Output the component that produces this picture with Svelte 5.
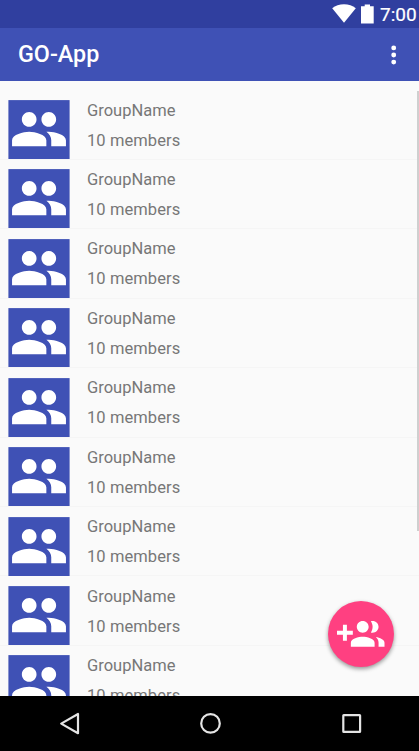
<script>
  const groups = Array.from({ length: 9 }, () => ({ name: 'GroupName', members: 10 }));
</script>

<div class="screen">
  <header class="status">
    <svg class="wifi" width="24" height="20" viewBox="0 0 24 20"><path d="M12 18.700 0.200 4.300C3.400 1.700 7.400.2 12 .2s8.600 1.500 11.800 4.100z" fill="#fff" /></svg>
    <svg class="battery" width="13" height="20" viewBox="0 0 13 20"><path d="M3.700 0.400h5.300v1.800h3.700v17.300H0V2.200h3.700z" fill="#fff" /></svg>
    <span class="clock">7:00</span>
  </header>

  <div class="toolbar">
    <h1>GO-App</h1>
    <svg width="8" height="22" viewBox="0 0 8 22" fill="#fff">
      <circle cx="3.700" cy="3.900" r="2.450" /><circle cx="3.700" cy="11" r="2.450" /><circle cx="3.700" cy="18.100" r="2.450" />
    </svg>
  </div>

  <main>
    <ul>
      {#each groups as group}
        <li>
          <svg class="avatar" width="62" height="60" viewBox="0 0 62 60">
            <rect x="0.400" y="0.100" width="61.200" height="58.900" fill="#3f51b5" />
            <path transform="translate(1.600 -0.200) scale(2.450)" fill="#fff" d="M16 11c1.660 0 2.990-1.340 2.990-3S17.660 5 16 5c-1.660 0-3 1.340-3 3s1.340 3 3 3zm-8 0c1.660 0 2.990-1.340 2.990-3S9.660 5 8 5C6.340 5 5 6.340 5 8s1.340 3 3 3zm0 2c-2.330 0-7 1.170-7 3.500V19h14v-2.500c0-2.330-4.670-3.500-7-3.500zm8 0c-.29 0-.62.02-.97.05 1.160.84 1.970 1.970 1.970 3.450V19h6v-2.500c0-2.330-4.670-3.500-7-3.500z" />
          </svg>
          <div class="info">
            <span class="name">{group.name}</span>
            <span class="count">{group.members} members</span>
          </div>
        </li>
      {/each}
    </ul>
    <div class="scrollbar"></div>
    <button class="fab" aria-label="Add group">
      <svg viewBox="0 0 24 24" fill="#fff"><path d="M8 10H5V7H3v3H0v2h3v3h2v-3h3v-2zm10 1c1.660 0 2.990-1.340 2.990-3S19.660 5 18 5c-.32 0-.63.05-.91.14.57.81.9 1.790.9 2.860s-.34 2.040-.9 2.860c.28.09.59.14.91.14zm-5 0c1.660 0 2.990-1.340 2.990-3S14.660 5 13 5c-1.660 0-3 1.340-3 3s1.340 3 3 3zm6.620 2.160c.83.73 1.380 1.660 1.380 2.840v2h3v-2c0-1.540-2.370-2.490-4.380-2.840zM13 13c-2 0-6 1-6 3v2h12v-2c0-2-4-3-6-3z" /></svg>
    </button>
  </main>

  <nav>
    <svg width="24" height="24" viewBox="0 0 24 24"><path d="M21 3v19.200L4.200 12.600z" /></svg>
    <svg width="24" height="24" viewBox="0 0 24 24"><circle cx="12.500" cy="12.400" r="9.300" /></svg>
    <svg width="24" height="24" viewBox="0 0 24 24"><rect x="4.300" y="4.100" width="16.800" height="16.800" rx="0.500" /></svg>
  </nav>
</div>

<style>
  .screen {
    width: 419px;
    height: 751px;
    display: flex;
    flex-direction: column;
    overflow: hidden;
    background: #fafafa;
    font-family: Roboto, "Liberation Sans", sans-serif;
  }
  .status {
    box-sizing: border-box;
    height: 28px;
    flex: none;
    display: flex;
    justify-content: flex-end;
    padding: 4px 2px 0 0;
    background: #303f9f;
    color: #fff;
  }
  .battery { margin: 0 6px 0 5px; }
  .clock {
    width: 37px;
    font-size: 19px;
    font-weight: 400;
    -webkit-text-stroke: 0.2px #fff;
    line-height: 22px;
    white-space: nowrap;
  }
  .toolbar {
    box-sizing: border-box;
    height: 53.400px;
    flex: none;
    display: flex;
    align-items: center;
    justify-content: space-between;
    padding: 0 21px 0 18px;
    background: #3f51b5;
  }
  h1 {
    margin: 0 0 2px;
    font-size: 23.300px;
    line-height: 28px;
    font-weight: 500;
    color: #fff;
  }
  main {
    position: relative;
    flex: 1;
    min-height: 0;
    overflow: hidden;
    padding-top: 9px;
  }
  ul { margin: 0; padding: 0; list-style: none; }
  li {
    box-sizing: border-box;
    height: 69.430px;
    display: flex;
    gap: 17px;
    padding: 9.600px 0 0 8px;
    border-bottom: 1px solid #f5f5f5;
  }
  .avatar { flex: none; }
  .info {
    display: flex;
    flex-direction: column;
    gap: 10px;
    padding-top: 0.600px;
    font-size: 16.500px;
    line-height: 20px;
    color: #777;
  }
  .count { letter-spacing: 0.080px; }
  .scrollbar {
    position: absolute;
    right: 0;
    top: 10px;
    width: 2px;
    height: 440px;
    background: #cfcfcf;
  }
  .fab {
    position: absolute;
    left: 328px;
    top: 520px;
    width: 66px;
    height: 66px;
    padding: 0;
    border: 0;
    border-radius: 50%;
    display: flex;
    align-items: center;
    justify-content: center;
    background: #ff4081;
    box-shadow: 0 2px 4px rgba(0, 0, 0, 0.4);
  }
  .fab svg { width: 47.500px; height: 47.500px; }
  nav {
    box-sizing: border-box;
    height: 55.500px;
    flex: none;
    display: flex;
    align-items: center;
    justify-content: space-between;
    padding: 0 56px 0 57px;
    background: #000;
  }
  nav svg { fill: none; stroke: #e4e4e4; stroke-width: 2.200; stroke-linejoin: round; }
</style>
